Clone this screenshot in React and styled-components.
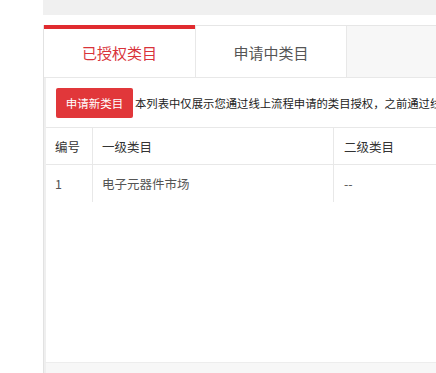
import React from "react";
import styled, { createGlobalStyle } from "styled-components";

const Global = createGlobalStyle`
  html, body { margin: 0; padding: 0; background: #fff; overflow: hidden; }
  body { font-family: "Noto Sans CJK SC", "Microsoft YaHei", sans-serif; }
`;

const Page = styled.div`
  width: 436px;
  height: 373px;
  padding-left: 43px;
  box-sizing: border-box;
  overflow: hidden;
`;

const TopBar = styled.div`
  height: 15px;
  background: #f0f0f0;
`;

const Panel = styled.div`
  margin-top: 10px;
  border-left: 1px solid #e2e2e2;
  border-top: 1px solid #e6e6e6;
  width: 700px;
`;

const TabBar = styled.div`
  display: flex;
  height: 51px;
  background: #f7f7f7;
  border-bottom: 1px solid #e8e8e8;
`;

const Tab = styled.div`
  box-sizing: border-box;
  display: flex;
  align-items: center;
  justify-content: center;
  width: ${(p) => p.$w}px;
  background: #fff;
  font-size: 15px;
  line-height: 20px;
  color: ${(p) => (p.$active ? "#d9333a" : "#555")};
  border-left: ${(p) => (p.$bordered ? "1px solid #e8e8e8" : "none")};
  border-right: ${(p) => (p.$bordered ? "1px solid #e8e8e8" : "none")};
  margin-top: ${(p) => (p.$active ? "-1px" : "0")};
  height: ${(p) => (p.$active ? "52px" : "51px")};
  border-top: ${(p) => (p.$active ? "4px solid #e02b2f" : "none")};
  padding-top: ${(p) => (p.$active ? "0" : "3px")};
`;

const Content = styled.div`
  border-left: 2px solid #efefef;
  background: #fff;
  min-height: 284px;
  box-sizing: border-box;
`;

const Toolbar = styled.div`
  display: flex;
  align-items: center;
  padding: 10px 10px 9px 10px;
  white-space: nowrap;
`;

const Button = styled.button`
  height: 30px;
  width: 77px;
  padding: 0;
  border: none;
  border-radius: 2px;
  background: #e1373a;
  color: #fff;
  font-family: inherit;
  font-size: 11.5px;
  line-height: 30px;
  cursor: pointer;
`;

const Note = styled.span`
  margin-left: 2px;
  font-size: 11.35px;
  color: #222;
  line-height: 16px;
`;

const Row = styled.div`
  display: grid;
  grid-template-columns: 47px 241px 1fr;
  height: ${(p) => p.$h}px;
  border-top: ${(p) => (p.$top ? "1px solid #e8e8e8" : "none")};
  border-bottom: ${(p) => (p.$bottom ? "1px solid #e8e8e8" : "none")};
`;

const Cell = styled.div`
  display: flex;
  align-items: center;
  padding-left: ${(p) => p.$pl}px;
  border-right: ${(p) => (p.$last ? "none" : "1px solid #e8e8e8")};
  font-size: 12.5px;
  color: ${(p) => (p.$head ? "#333" : "#555")};
  white-space: nowrap;
`;

const Footer = styled.div`
  height: 12px;
  background: #f7f7f7;
  border-top: 1px solid #ededed;
  border-left: 2px solid #efefef;
`;

export default function App() {
  return (
    <>
      <Global />
      <Page>
        <TopBar />
        <Panel>
          <TabBar>
            <Tab $active $w={151}>已授权类目</Tab>
            <Tab $bordered $w={152}>申请中类目</Tab>
          </TabBar>
          <Content>
            <Toolbar>
              <Button>申请新类目</Button>
              <Note>本列表中仅展示您通过线上流程申请的类目授权，之前通过线下申请的类目授权不在此展示</Note>
            </Toolbar>
            <Row $h={36} $top $bottom>
              <Cell $head $pl={9}>编号</Cell>
              <Cell $head $pl={9}>一级类目</Cell>
              <Cell $head $pl={10} $last>二级类目</Cell>
            </Row>
            <Row $h={37}>
              <Cell $pl={9}>1</Cell>
              <Cell $pl={9}>电子元器件市场</Cell>
              <Cell $pl={10} $last>--</Cell>
            </Row>
          </Content>
          <Footer />
        </Panel>
      </Page>
    </>
  );
}
